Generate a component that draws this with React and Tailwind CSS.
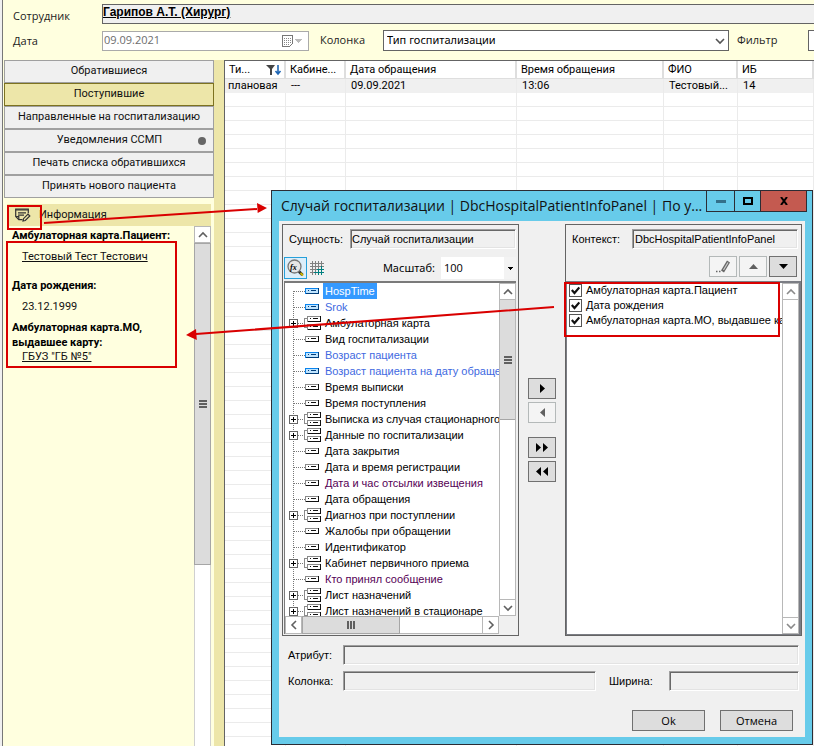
// Hospital admissions screen with the attribute picker dialog on top
import React from 'react';

const MENU = [
  { label: 'Обратившиеся' },
  { label: 'Поступившие', active: true },
  { label: 'Направленные на госпитализацию' },
  { label: 'Уведомления ССМП', dot: true },
  { label: 'Печать списка обратившихся' },
  { label: 'Принять нового пациента' },
];

const TREE = [
  { text: 'HospTime', kind: 'blue', selected: true },
  { text: 'Srok', kind: 'blue' },
  { text: 'Амбулаторная карта', group: true },
  { text: 'Вид госпитализации' },
  { text: 'Возраст пациента', kind: 'blue' },
  { text: 'Возраст пациента на дату обраще', kind: 'blue' },
  { text: 'Время выписки' },
  { text: 'Время поступления' },
  { text: 'Выписка из случая стационарного', group: true },
  { text: 'Данные по госпитализации', group: true },
  { text: 'Дата закрытия' },
  { text: 'Дата и время регистрации' },
  { text: 'Дата и час отсылки извещения', kind: 'purple' },
  { text: 'Дата обращения' },
  { text: 'Диагноз при поступлении', group: true },
  { text: 'Жалобы при обращении' },
  { text: 'Идентификатор' },
  { text: 'Кабинет первичного приема', group: true },
  { text: 'Кто принял сообщение', kind: 'purple' },
  { text: 'Лист назначений', group: true },
  { text: 'Лист назначений в стационаре', group: true },
];

const CONTEXT_ITEMS = [
  'Амбулаторная карта.Пациент',
  'Дата рождения',
  'Амбулаторная карта.МО, выдавшее ка',
];

const EMPTY_ROWS = Array.from({ length: 47 }, (_, i) => i);

const inset =
  'border border-t-[#9f9f9f] border-l-[#9f9f9f] border-r-white border-b-white bg-[#f0f0f0] shadow-[inset_1px_1px_0_#686868,inset_-1px_-1px_0_#e3e3e3] outline-none';
const scrollBtn = 'flex shrink-0 items-center justify-center border border-[#b8b8b8] bg-white text-[#606060]';

function Chevron({ dir }) {
  const d = {
    up: 'M1 7 L5 3 L9 7',
    down: 'M1 3 L5 7 L9 3',
    left: 'M7 1 L3 5 L7 9',
    right: 'M3 1 L7 5 L3 9',
  }[dir];
  return (
    <svg className="h-2.5 w-2.5" viewBox="0 0 10 10" fill="none" stroke="currentColor" strokeWidth="1.6">
      <path d={d} />
    </svg>
  );
}

function Grip({ vertical }) {
  return (
    <svg className="h-2.5 w-2.5" viewBox="0 0 10 10" fill="#606060" shapeRendering="crispEdges">
      {vertical ? (
        <path d="M1 1h8v2H1zM1 4h8v2H1zM1 7h8v2H1z" />
      ) : (
        <path d="M1 1h2v8H1zM4 1h2v8H4zM7 1h2v8H7z" />
      )}
    </svg>
  );
}

function Node({ x, y, blue }) {
  return (
    <g transform={`translate(${x} ${y})`}>
      <path d="M0 0h14v6H0z" fill={blue ? '#0a84ee' : '#8a8a8a'} />
      <path d="M1 1h12v4H1z" fill={blue ? '#bfe4ff' : '#fff'} />
      <path d="M13 0h1v6H1V5h12z" fill={blue ? '#003c78' : '#111'} />
      <path d="M3 2h1v1H3zM6 2h5v1H6z" fill={blue ? '#003c78' : '#111'} />
    </g>
  );
}

function TreeRow({ item, first }) {
  const color =
    item.kind === 'blue' ? 'text-[#4169e1]' : item.kind === 'purple' ? 'text-[#550055]' : 'text-black';
  return (
    <li className="flex h-4 items-center">
      <svg className="h-4 w-9 shrink-0" viewBox="0 0 36 16" shapeRendering="crispEdges">
        <path d={first ? 'M8.5 8v8' : 'M8.5 0v16'} stroke="#777" strokeDasharray="1 1" />
        <path d="M9 8.5h11" stroke="#777" strokeDasharray="1 1" />
        {item.group ? (
          <>
            <path d="M4.5 4.5h8v8h-8z" fill="#fff" stroke="#666" />
            <path d="M6 8.5h5M8.500 6v5" stroke="#000" />
            <path d="M22 3.500h-2.500v9h2.500" fill="none" stroke="#8a8a8a" />
            <Node x={22} y={1} />
            <Node x={22} y={9} />
          </>
        ) : (
          <Node x={20} y={5} blue={item.kind === 'blue'} />
        )}
      </svg>
      <span
        className={
          item.selected
            ? 'ml-0.5 h-4 bg-[#3399ff] px-0.5 leading-4 whitespace-nowrap text-white'
            : `ml-1 leading-4 whitespace-nowrap ${color}`
        }
      >
        {item.text}
      </span>
    </li>
  );
}

function HeaderForm() {
  return (
    <header className="font-['Open_Sans',sans-serif] text-[11px] text-[#222]">
      <div className="flex pt-1 pl-[9px]">
        <label htmlFor="employee" className="w-[89px] pt-1 leading-4">
          Сотрудник
        </label>
        <input
          id="employee"
          readOnly
          defaultValue="Гарипов А.Т. (Хирург)"
          className="h-5 min-w-0 flex-1 border border-r-0 border-[#646464] bg-[#f0f0f0] pb-1 font-['Liberation_Sans',sans-serif] text-[12px] font-bold text-black underline outline-none"
        />
      </div>
      <div className="flex items-center pt-1.5 pl-[9px]">
        <label htmlFor="date" className="w-[89px] pt-0.5">
          Дата
        </label>
        <div className="flex h-5 w-[207px] shrink-0 items-center border border-[#aaa] bg-white">
          <input
            id="date"
            readOnly
            defaultValue="09.09.2021"
            className="min-w-0 flex-1 pl-px text-[11px] text-[#6d6d6d] outline-none"
          />
          <svg className="mr-1.5 h-3 w-5" viewBox="0 0 20 12" shapeRendering="crispEdges">
            <path d="M.5.5h10v8l-3 3h-7z" fill="#fff" stroke="#777" />
            <path d="M2 3h7M2 5h7M2 7h7M2 9h5" stroke="#888" strokeDasharray="1 1" />
            <path d="M13 4h7l-3.500 4z" fill="#bbb" />
          </svg>
        </div>
        <label htmlFor="column" className="ml-[11px] w-[63px] shrink-0">
          Колонка
        </label>
        <div className="grid w-[346px] shrink-0 items-center">
          <select
            id="column"
            className="col-start-1 row-start-1 h-[21px] appearance-none border border-[#646464] bg-white pl-[3px] font-['Noto_Sans',sans-serif] text-[11px] text-black outline-none"
          >
            <option>Тип госпитализации</option>
          </select>
          <span className="pointer-events-none col-start-1 row-start-1 mr-1 justify-self-end text-[#555]">
            <Chevron dir="down" />
          </span>
        </div>
        <label htmlFor="filter" className="ml-2 w-[71px] shrink-0">
          Фильтр
        </label>
        <input id="filter" className="h-[21px] min-w-0 flex-1 border border-r-0 border-[#646464] bg-white outline-none" />
      </div>
    </header>
  );
}

function Sidebar() {
  return (
    <aside className="flex w-[210px] shrink-0 flex-col font-['Roboto',sans-serif] text-[11px] text-[#111]">
      {MENU.map((m) => (
        <button
          key={m.label}
          className={`flex h-[23px] shrink-0 items-center justify-center border ${
            m.active ? 'border-[#7d7220] bg-[#ede6a9]' : 'border-[#a0a0a0] bg-[#f0f0f0]'
          }`}
        >
          {m.dot && <span className="w-4" />}
          <span className={m.dot ? 'flex-1' : ''}>{m.label}</span>
          {m.dot && <span className="mr-[7px] h-2 w-2 rounded-full bg-[#666]" />}
        </button>
      ))}

      <section className="mx-[3px] mt-1.5 flex min-h-0 flex-1 flex-col">
        <h2 className="flex h-[22px] shrink-0 items-center gap-2 bg-[#ede6a9] pl-2">
          <svg className="h-4 w-4" viewBox="0 0 16 16" fill="none" stroke="#333" strokeWidth="1.2">
            <path d="M7.500 12.600H3.800L.7 9.600V2.200h12.600v4" />
            <path d="M.7 3h12.600M3 5.800h8M3 8.200h6M1 9.600h2.800v3" />
            <path d="M8 14l.5-2.300 4.500-4.500 1.800 1.800-4.500 4.500z" fill="#ede6a9" />
          </svg>
          Информация
        </h2>
        <div className="flex min-h-0 flex-1">
          <div className="min-w-0 flex-1 overflow-hidden pt-0.5 pl-[5px]">
            <h3 className="leading-4 font-bold whitespace-nowrap text-black">Амбулаторная карта.Пациент:</h3>
            <a href="#patient" className="mt-[5px] ml-2.5 block leading-4 underline">
              Тестовый Тест Тестович
            </a>
            <h3 className="mt-[13px] leading-4 font-bold text-black">Дата рождения:</h3>
            <p className="mt-[5px] ml-2.5 leading-4">23.12.1999</p>
            <h3 className="mt-[5px] leading-[15px] font-bold text-black">
              Амбулаторная карта.МО,
              <br />
              выдавшее карту:
            </h3>
            <a href="#mo" className="ml-2.5 block leading-[13px] underline">
              ГБУЗ "ГБ №5"
            </a>
          </div>
          <div className="flex w-[17px] shrink-0 flex-col bg-white">
            <button aria-label="Вверх" className={`${scrollBtn} h-[17px]`}>
              <Chevron dir="up" />
            </button>
            <div className="flex h-[322px] shrink-0 items-center justify-center border border-[#a6a6a6] bg-[#dcdcdc]">
              <Grip vertical />
            </div>
            <div className="flex-1 border-x border-[#d0d0d0]" />
          </div>
        </div>
      </section>
    </aside>
  );
}

function VisitsTable() {
  const th = 'h-[18px] border-r-2 border-b border-[#dedede] p-0 pl-1 text-left font-normal whitespace-nowrap';
  const td = 'h-3.5 border-r border-[#ebebeb] p-0 pl-[5px] whitespace-nowrap';
  return (
    <main className="min-w-0 flex-1 overflow-hidden border-t border-l border-[#646464] bg-white">
      <table className="w-full table-fixed border-separate border-spacing-0 font-['Roboto',sans-serif] text-[11px] leading-3 text-black">
        <colgroup>
          <col className="w-[61px]" />
          <col className="w-[60px]" />
          <col className="w-[171px]" />
          <col className="w-[147px]" />
          <col className="w-[74px]" />
          <col />
        </colgroup>
        <thead>
          <tr>
            <th className={th}>
              <span className="flex items-center justify-between">
                Ти...
                <svg className="mr-0.5 h-3 w-4" viewBox="0 0 16 12">
                  <path d="M0 1h9L6 5v6H4V5z" fill="#444" />
                  <path d="M12 1v9M9.500 7l2.500 3 2.500-3" fill="none" stroke="#1e66b5" strokeWidth="1.6" />
                </svg>
              </span>
            </th>
            <th className={th}>Кабине...</th>
            <th className={th}>Дата обращения</th>
            <th className={th}>Время обращения</th>
            <th className={th}>ФИО</th>
            <th className={th}>ИБ</th>
          </tr>
        </thead>
        <tbody>
          <tr className="bg-[#f0f0f0]">
            <td className="h-3.5 p-0 pl-[3px] whitespace-nowrap">плановая</td>
            <td className={td}>---</td>
            <td className={td}>09.09.2021</td>
            <td className={td}>13:06</td>
            <td className={td}>Тестовый...</td>
            <td className={td}>14</td>
          </tr>
          {EMPTY_ROWS.map((i) => (
            <tr key={i}>
              {[0, 1, 2, 3, 4, 5].map((c) => (
                <td key={c} className="h-3.5 border-r border-b border-[#ebebeb] p-0" />
              ))}
            </tr>
          ))}
        </tbody>
      </table>
    </main>
  );
}

function EntityPanel() {
  return (
    <section className="flex h-[412px] w-[237px] flex-col border border-[#646464] py-px pr-0.5 pl-px">
      <div className="flex items-center pt-[3px] pl-[5px]">
        <label htmlFor="entity" className="w-[61px] shrink-0">
          Сущность:
        </label>
        <input
          id="entity"
          readOnly
          defaultValue="Случай госпитализации"
          className={`h-5 min-w-0 flex-1 pl-px ${inset}`}
        />
      </div>
      <div className="mt-2 flex items-center">
        <button aria-label="Формулы" className="flex h-[22px] w-[23px] items-center justify-center border border-[#26a0da] bg-[#dceefa]">
          <svg className="h-[18px] w-[18px]" viewBox="0 0 18 18">
            <path d="M12 12.500l3.500 3.500" stroke="#333" strokeWidth="3" />
            <path d="M13.500 14l2.500 2.500" stroke="#c8b400" strokeWidth="2" />
            <circle cx="7.5" cy="7.5" r="6.5" fill="#e6e6e6" stroke="#777" strokeWidth="1.3" />
            <text x="3" y="10.5" fontSize="8" fontStyle="italic" fontWeight="bold" fontFamily="Liberation Serif, serif">
              fx
            </text>
          </svg>
        </button>
        <button aria-label="Сетка" className="ml-0.5 h-4 w-4">
          <svg className="h-4 w-4" viewBox="0 0 16 16" fill="none" shapeRendering="crispEdges">
            <path d="M1 3.500h14M1 6.500h14M1 9.500h14M1 12.500h14M3.500 1v14M6.500 1v14M9.500 1v14M12.500 1v14" stroke="#808080" />
            <path d="M8 9.500h7M5 12.500h10M12.500 6v9M9.500 9v6" stroke="#008080" />
          </svg>
        </button>
        <label htmlFor="scale" className="ml-auto pr-1.5 font-['Noto_Sans',sans-serif]">
          Масштаб:
        </label>
        <div className="grid w-[75px] shrink-0 items-center">
          <select
            id="scale"
            className="col-start-1 row-start-1 h-[22px] appearance-none bg-white pl-[3px] font-['Open_Sans',sans-serif] outline-none"
          >
            <option>100</option>
          </select>
          <span className="pointer-events-none col-start-1 row-start-1 flex h-[22px] w-3 items-center justify-center justify-self-end bg-[#f3f3f3]">
            <svg className="h-[3px] w-[5px]" viewBox="0 0 5 3" shapeRendering="crispEdges">
              <path d="M0 0h5L2.500 3z" />
            </svg>
          </span>
        </div>
      </div>
      <div className="mt-0.5 flex min-h-0 flex-1 flex-col border-t-2 border-l border-[#7a7a7a] bg-white">
        <div className="flex min-h-0 flex-1">
          <ul className="min-w-0 flex-1 overflow-hidden">
            {TREE.map((item, i) => (
              <TreeRow key={item.text} item={item} first={i === 0} />
            ))}
          </ul>
          <div className="flex w-[17px] shrink-0 flex-col border-x border-[#b8b8b8]">
            <button aria-label="Вверх" className="flex h-[17px] items-center justify-center border-y border-[#b8b8b8] text-[#606060]">
              <Chevron dir="up" />
            </button>
            <div className="flex h-[120px] items-center justify-center border-b border-[#a6a6a6] bg-[#dcdcdc]">
              <Grip vertical />
            </div>
            <button aria-label="Вниз" className="mt-auto flex h-[17px] items-center justify-center border-y border-[#b8b8b8] text-[#606060]">
              <Chevron dir="down" />
            </button>
          </div>
        </div>
        <div className="flex h-[18px] shrink-0">
          <button aria-label="Влево" className={`${scrollBtn} w-[17px]`}>
            <Chevron dir="left" />
          </button>
          <div className="flex w-[98px] items-center justify-center border border-[#a6a6a6] bg-[#dcdcdc]">
            <Grip />
          </div>
          <div className="flex-1 border-y border-[#b8b8b8]" />
          <button aria-label="Вправо" className={`${scrollBtn} w-[17px]`}>
            <Chevron dir="right" />
          </button>
          <div className="w-[17px] bg-[#f0f0f0]" />
        </div>
      </div>
    </section>
  );
}

function MoveButtons() {
  const btn = 'flex h-[21px] w-7 items-center justify-center border';
  return (
    <div className="flex flex-col items-center">
      <button aria-label="Добавить" className={`${btn} mt-[154px] border-[#707070] bg-[#ddd]`}>
        <svg className="h-[9px] w-[5px]" viewBox="0 0 5 9">
          <path d="M0 0l5 4.500L0 9z" />
        </svg>
      </button>
      <button aria-label="Убрать" disabled className={`${btn} mt-[3px] border-[#b4b9b9] bg-[#f4f4f4]`}>
        <svg className="h-[9px] w-[5px]" viewBox="0 0 5 9" fill="#606060">
          <path d="M5 0L0 4.500 5 9z" />
        </svg>
      </button>
      <button aria-label="Добавить все" className={`${btn} mt-3.5 border-[#707070] bg-[#ddd]`}>
        <svg className="h-[9px] w-3" viewBox="0 0 12 9">
          <path d="M0 0l5 4.500L0 9zM7 0l5 4.500L7 9z" />
        </svg>
      </button>
      <button aria-label="Убрать все" className={`${btn} mt-[3px] border-[#707070] bg-[#ddd]`}>
        <svg className="h-[9px] w-3" viewBox="0 0 12 9">
          <path d="M5 0L0 4.500 5 9zM12 0L7 4.500 12 9z" />
        </svg>
      </button>
    </div>
  );
}

function ContextPanel() {
  const btn = 'flex h-[21px] w-7 items-center justify-center border';
  return (
    <section className="flex h-[412px] w-[237px] flex-col border border-[#646464]">
      <div className="flex items-center pt-1 pr-[3px] pl-1.5">
        <label htmlFor="context" className="w-[60px] shrink-0">
          Контекст:
        </label>
        <input
          id="context"
          readOnly
          defaultValue="DbcHospitalPatientInfoPanel"
          className={`h-5 min-w-0 flex-1 pl-0.5 ${inset}`}
        />
      </div>
      <div className="mt-[7px] flex justify-end gap-0.5 pr-1">
        <button aria-label="Изменить" disabled className={`${btn} border-[#b4b9b9] bg-[#f4f4f4]`}>
          <svg className="h-3.5 w-4" viewBox="0 0 16 14" fill="none" stroke="#666">
            <path d="M1 11.500h1.500M4 11.500h1.500" strokeWidth="1.5" />
            <path d="M7.500 11.500L13.500 1.500" strokeWidth="3.5" />
            <path d="M8.500 10L13 2.500" stroke="#ccc" strokeWidth="1.2" />
          </svg>
        </button>
        <button aria-label="Выше" disabled className={`${btn} border-[#b4b9b9] bg-[#f4f4f4]`}>
          <svg className="h-[5px] w-[9px]" viewBox="0 0 9 5" fill="#606060">
            <path d="M0 5l4.500-5L9 5z" />
          </svg>
        </button>
        <button aria-label="Ниже" className={`${btn} border-[#707070] bg-[#ddd]`}>
          <svg className="h-[5px] w-[9px]" viewBox="0 0 9 5">
            <path d="M0 0h9L4.500 5z" />
          </svg>
        </button>
      </div>
      <div className="mt-1 flex min-h-0 flex-1 border-t-2 border-r-2 border-b border-l border-[#7b7d84] bg-white">
        <ul className="min-w-0 flex-1 overflow-hidden pl-0.5">
          {CONTEXT_ITEMS.map((text) => (
            <li key={text}>
              <label className="flex h-[15px] items-center gap-1 whitespace-nowrap">
                <span className="grid h-[13px] w-[13px] shrink-0 place-items-center">
                  <input
                    type="checkbox"
                    defaultChecked
                    className="peer col-start-1 row-start-1 h-[13px] w-[13px] appearance-none border border-[#555] bg-white"
                  />
                  <svg
                    className="pointer-events-none invisible col-start-1 row-start-1 h-[9px] w-[9px] peer-checked:visible"
                    viewBox="0 0 9 9"
                    fill="none"
                    stroke="#111"
                    strokeWidth="2.2"
                  >
                    <path d="M.8 4l2.700 3L8.300 1.500" />
                  </svg>
                </span>
                {text}
              </label>
            </li>
          ))}
        </ul>
        <div className="flex w-[17px] shrink-0 flex-col border-x border-[#b8b8b8]">
          <button aria-label="Вверх" className="flex h-[17px] items-center justify-center border-y border-[#b8b8b8] text-[#8a8a8a]">
            <Chevron dir="up" />
          </button>
          <button aria-label="Вниз" className="mt-auto flex h-[17px] items-center justify-center border-y border-[#b8b8b8] text-[#8a8a8a]">
            <Chevron dir="down" />
          </button>
        </div>
      </div>
    </section>
  );
}

function AttributeDialog() {
  return (
    <div
      role="dialog"
      aria-labelledby="dialog-title"
      className="absolute top-[190px] left-[271px] w-[542px] border border-[#2c2c34] bg-[#67cbea] font-['Liberation_Sans',sans-serif] text-[11px] text-black"
    >
      <div className="flex h-[30px] items-start pl-[9px]">
        <h1 id="dialog-title" className="min-w-0 flex-1 font-['Open_Sans',sans-serif] text-[14px] leading-[30px] whitespace-nowrap text-[#111]">
          Случай госпитализации | DbcHospitalPatientInfoPanel | По у...
        </h1>
        <div className="mr-[5px] flex h-[21px] divide-x divide-[#2c2c34] border border-t-0 border-[#2c2c34]">
          <button aria-label="Свернуть" className="flex w-7 items-center justify-center">
            <span className="h-[3px] w-2.5 bg-[#33708a]" />
          </button>
          <button aria-label="Развернуть" className="flex w-[26px] items-center justify-center">
            <span className="h-2 w-2.5 border-2 border-black" />
          </button>
          <button aria-label="Закрыть" className="flex w-[45px] items-center justify-center bg-[#c45a50]">
            <svg className="h-2 w-2" viewBox="0 0 8 8" stroke="#000" strokeWidth="2">
              <path d="M1 0l6 8M7 0L1 8" />
            </svg>
          </button>
        </div>
      </div>

      <div className="mx-[7px] mb-[7px] bg-[#f0f0f0] px-[3px] pt-[3px] pb-1.5">
        <div className="flex justify-between">
          <EntityPanel />
          <MoveButtons />
          <ContextPanel />
        </div>

        <div className="mt-[9px] flex items-center pr-[3px] pl-1.5">
          <label htmlFor="attr" className="w-[55px] shrink-0">
            Атрибут:
          </label>
          <input id="attr" readOnly className={`h-5 min-w-0 flex-1 ${inset}`} />
        </div>
        <div className="mt-1.5 flex items-center pr-[3px] pl-1.5">
          <label htmlFor="col" className="w-[55px] shrink-0">
            Колонка:
          </label>
          <input id="col" readOnly className={`h-5 min-w-0 flex-1 ${inset}`} />
          <label htmlFor="width" className="w-[73px] shrink-0 pl-[13px]">
            Ширина:
          </label>
          <input id="width" readOnly className={`h-5 w-[130px] shrink-0 ${inset}`} />
        </div>

        <div className="mt-[19px] flex justify-end gap-[15px] pr-[9px] font-['Open_Sans',sans-serif]">
          <button className="h-[21px] w-[73px] border border-[#707070] bg-[#ddd] leading-[18px]">Ok</button>
          <button className="h-[21px] w-[73px] border border-[#707070] bg-[#ddd] leading-[18px]">Отмена</button>
        </div>
      </div>
    </div>
  );
}

// Red frames and arrows drawn over the screen
function Callouts() {
  return (
    <svg className="pointer-events-none absolute top-0 left-0 h-[746px] w-[814px]" viewBox="0 0 814 746">
      <g fill="none" stroke="#d90000" strokeWidth="2">
        <path d="M8 206h33v23H8zM7 242h169v125H7zM565 283h214v53H565z" />
        <path d="M44 223L257 209M554 307L196 334" />
      </g>
      <path d="M267 208l-10-5 .7 10zM186 335l10-6 .8 11z" fill="#d90000" />
    </svg>
  );
}

export default function App() {
  return (
    <div className="relative flex h-screen overflow-hidden bg-[#f0f0f0]">
      <div className="ml-0.5 flex min-w-0 flex-1 flex-col border-l border-[#777] bg-[#ffffdf] pl-px">
        <HeaderForm />
        <div className="mt-[9px] flex min-h-0 flex-1">
          <Sidebar />
          <div className="w-2.5 shrink-0 bg-[#ede6a9]" />
          <VisitsTable />
        </div>
      </div>
      <AttributeDialog />
      <Callouts />
    </div>
  );
}
